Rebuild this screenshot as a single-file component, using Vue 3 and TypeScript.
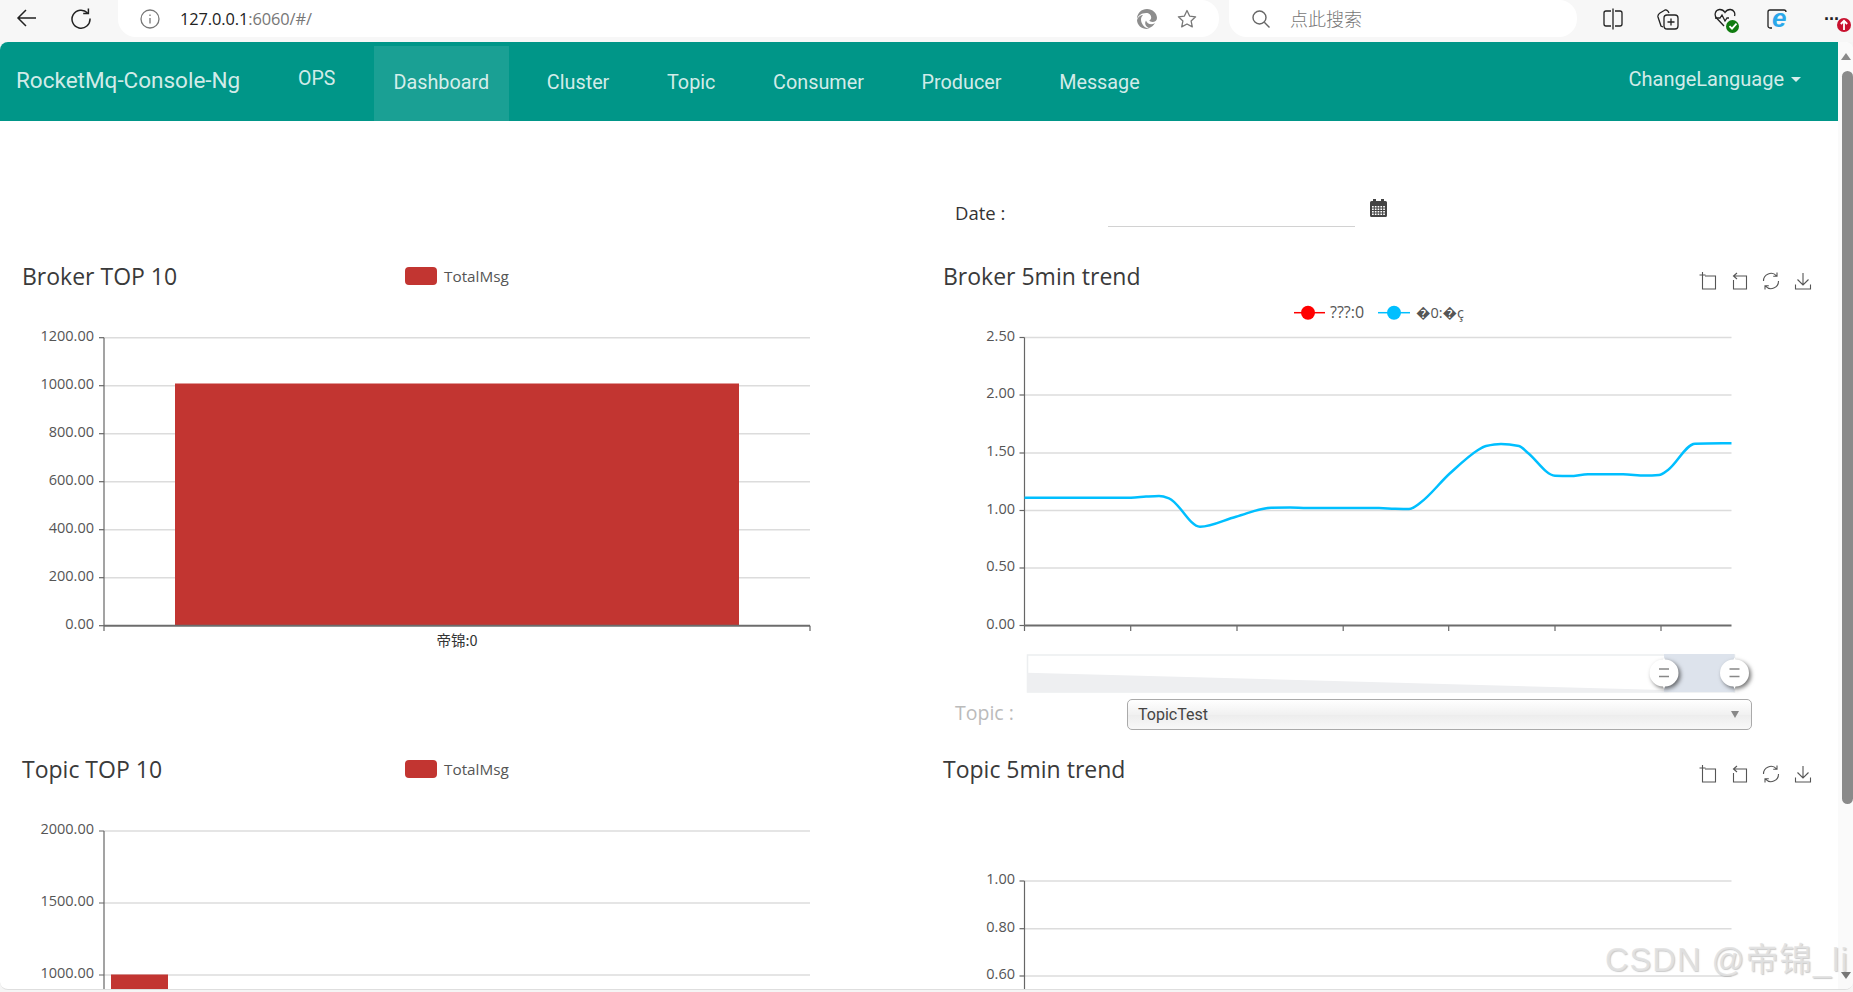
<script setup lang="ts">
type Pt = [number, number]

const navItems = ['Dashboard', 'Cluster', 'Topic', 'Consumer', 'Producer', 'Message']

const brokerTop = [
  { label: '1200.00', y: 337.7 },
  { label: '1000.00', y: 385.7 },
  { label: '800.00', y: 433.7 },
  { label: '600.00', y: 481.7 },
  { label: '400.00', y: 529.7 },
  { label: '200.00', y: 577.7 },
  { label: '0.00', y: 625.7 },
]
const brokerTrend = [
  { label: '2.50', y: 337.5 },
  { label: '2.00', y: 395 },
  { label: '1.50', y: 453 },
  { label: '1.00', y: 510.5 },
  { label: '0.50', y: 568 },
  { label: '0.00', y: 625.5 },
]
const trendTicks = [1024.5, 1130.7, 1237, 1343.2, 1448.7, 1555, 1661]
const topicTop = [
  { label: '2000.00', y: 831 },
  { label: '1500.00', y: 903 },
  { label: '1000.00', y: 975 },
]
const topicTrend = [
  { label: '1.00', y: 881 },
  { label: '0.80', y: 928.7 },
  { label: '0.60', y: 976 },
]

const trendPoints: Pt[] = [
  [1024.5, 497.7], [1131, 497.7], [1146, 496.6], [1159, 495.9], [1169, 498.3], [1200, 526.7], [1236, 516.7],
  [1271, 507.7], [1290, 507.4], [1307, 508], [1379, 508], [1395, 508.8], [1409, 509], [1420, 503], [1450, 473.3], [1478, 450],
  [1486, 446], [1501, 444], [1519, 446], [1528, 453], [1555, 475.7], [1570, 476], [1588, 474.3], [1623, 474.3], [1645, 475.6], [1659, 475],
  [1668, 470], [1695, 443.7], [1731.5, 443.3],
]

function monotone(p: Pt[]): string {
  const n = p.length
  const slopes: number[] = []
  for (let i = 0; i < n - 1; i++) slopes.push((p[i + 1][1] - p[i][1]) / (p[i + 1][0] - p[i][0]))
  const m: number[] = [slopes[0]]
  for (let i = 1; i < n - 1; i++) {
    const a = slopes[i - 1]
    const b = slopes[i]
    m.push(a * b <= 0 ? 0 : (2 * a * b) / (a + b))
  }
  m.push(slopes[n - 2])
  let d = `M${p[0][0]} ${p[0][1]}`
  for (let i = 0; i < n - 1; i++) {
    const dx = (p[i + 1][0] - p[i][0]) / 3
    d += ` C${(p[i][0] + dx).toFixed(1)} ${(p[i][1] + m[i] * dx).toFixed(1)} ${(p[i + 1][0] - dx).toFixed(1)} ${(p[i + 1][1] - m[i + 1] * dx).toFixed(1)} ${p[i + 1][0]} ${p[i + 1][1]}`
  }
  return d
}
const trendPath = monotone(trendPoints)
const handles = [1664, 1734.5]
</script>

<template>
  <div class="window">
    <header class="browser">
      <svg class="b-ico back" width="22" height="22" viewBox="0 0 22 22"><path d="M20 11H2M10 3l-8 8 8 8" /></svg>
      <svg class="b-ico reload" width="22" height="22" viewBox="0 0 22 22"><path d="M17.6 6A9 9 0 1 0 20 11.5" /><path d="M18.4 1.5V6.6H13.2" /></svg>
      <div class="pill url">
        <svg class="info" width="20" height="20" viewBox="0 0 20 20"><circle cx="10" cy="10" r="9" /><path d="M10 9v5.5M10 5.5v1.4" /></svg>
        <span class="addr"><b>127.0.0.1</b>:6060/#/</span>
        <svg class="edge" width="22" height="22" viewBox="0 0 22 22"><path d="M1 11C1 5 5.5 1 11 1c5.5 0 10 4 10 9 0 2.600-2.200 4-4.500 4-1.400 0-2.800-.5-3.300-1.400 1.300-.7 2-1.800 2-3C15.200 7 13 5 10.200 5 5 5 2 8 1 11z" /><path d="M1 12c1-3.500 4-5 6-5-1.500 1.500-2 3-2 4.500C5 16 9 20.500 13.500 20.700 12.700 21 11.800 21 11 21 5.500 21 1 17 1 12z" /><path d="M10 12.500c1 3.500 5.500 5 9 2.500-1.400 2.500-3.600 4.400-6 5-3-1-5-4.500-3-7.500z" /></svg>
        <svg class="star" width="20" height="20" viewBox="0 0 20 20"><path d="M10 1.500l2.600 5.600 6 .7-4.500 4.100 1.200 6L10 15l-5.300 2.900 1.200-6L1.400 7.800l6-.7z" /></svg>
      </div>
      <div class="pill search">
        <svg class="mag" width="20" height="20" viewBox="0 0 20 20"><circle cx="8.500" cy="8.500" r="6.500" /><path d="M13.300 13.300L18.500 18.500" /></svg>
        <span class="placeholder">点此搜索</span>
      </div>
      <div class="tools">
        <svg width="20" height="22" viewBox="0 0 20 22"><path d="M8 3H3a2 2 0 0 0-2 2v11a2 2 0 0 0 2 2h5M12 3h5a2 2 0 0 1 2 2v11a2 2 0 0 1-2 2h-5M10 .5v21" /></svg>
        <svg width="22" height="22" viewBox="0 0 22 22"><path d="M6 19l-2-1-3-9c-.5-2 .5-3 2-4l5-3c2-.5 3 .5 4 3" /><rect x="7" y="7" width="14" height="14" rx="3" /><path d="M14 10.500v7M10.500 14h7" /></svg>
        <span class="health">
          <svg width="22" height="22" viewBox="0 0 22 22"><path d="M10 19L2.500 11C0 8 1 3 5.500 2.500 8 2.300 10 4 11 5.500 12 4 14 2.300 16.500 2.500 20 3 21.500 6 20.500 9" /><path d="M1 11h5l2-3 3 6 2-3h2" /></svg>
          <i class="ok"><svg width="12" height="12" viewBox="0 0 12 12"><path d="M2.500 6.200l2.500 2.500 4.500-5" /></svg></i>
        </span>
        <span class="ie">
          <svg width="22" height="24" viewBox="0 0 22 24"><path d="M5 21H3a2 2 0 0 1-2-2V5a2 2 0 0 1 2-2h14a2 2 0 0 1 2 2" /></svg>
          <i class="ie-e">e</i>
        </span>
        <span class="more">
          <span class="dots">···</span>
          <i class="up"><svg width="12" height="12" viewBox="0 0 12 12"><path d="M6 11V2M2.800 5L6 1.800 9.200 5" /></svg></i>
        </span>
      </div>
    </header>

    <div class="page">
      <div class="main">
        <nav class="navbar">
          <span class="brand">RocketMq-Console-Ng</span>
          <a class="ops">OPS</a>
          <ul class="nav-list">
            <li v-for="(n, i) in navItems" :key="n" :class="{ active: i === 0 }">{{ n }}</li>
          </ul>
          <a class="lang">ChangeLanguage<i class="caret"></i></a>
        </nav>

        <section class="content">
          <div class="date-row">
            <label class="date-label">Date :</label>
            <div class="date-input"></div>
            <svg class="cal" width="17" height="18" viewBox="0 0 17 18">
              <path d="M0 3.500A1.500 1.500 0 0 1 1.500 2H3V0h3v2h5V0h3v2h1.500A1.500 1.500 0 0 1 17 3.500V16.500A1.500 1.500 0 0 1 15.500 18h-14A1.500 1.500 0 0 1 0 16.500z" fill="#444" />
              <g fill="#fff"><rect v-for="c in 20" :key="c" :x="2 + ((c - 1) % 5) * 2.800" :y="7 + Math.floor((c - 1) / 5) * 2.500" width="1.700" height="1.500" /></g>
            </svg>
          </div>

          <div class="charts">
            <article class="panel">
              <div class="panel-head">
                <h3 class="title">Broker TOP 10</h3>
                <span class="legend"><i class="swatch"></i>TotalMsg</span>
              </div>
              <svg class="chart" width="921" height="360" viewBox="0 301 921 360">
                <g v-for="t in brokerTop" :key="t.label">
                  <line v-if="t.y < 625" class="grid" x1="104" x2="810" :y1="t.y" :y2="t.y" />
                  <line class="axis" x1="99" x2="104" :y1="t.y" :y2="t.y" />
                  <text class="tick" x="94" :y="t.y + 3" text-anchor="end">{{ t.label }}</text>
                </g>
                <rect x="175" y="383.500" width="564" height="242" fill="#c23531" />
                <line class="axis" x1="104" x2="104" y1="337.700" y2="631" />
                <line class="axis thick" x1="104" x2="810" y1="625.700" y2="625.700" />
                <line class="axis" x1="810" x2="810" y1="625.700" y2="631" />
                <text class="tick cjk" x="457" y="645.500" text-anchor="middle">帝锦:0</text>
              </svg>
            </article>

            <article class="panel">
              <div class="panel-head">
                <h3 class="title">Broker 5min trend</h3>
                <div class="toolbox">
                  <svg width="18" height="18" viewBox="0 0 18 18"><path d="M1 3v6M-2 6h6" transform="translate(2.500 -3)" /><path d="M3.500 6v11h13V4H6" /></svg>
                  <svg width="18" height="18" viewBox="0 0 18 18"><path d="M3.500 8v9h13V4H4M7 1L3.500 4 7 7" /></svg>
                  <svg width="20" height="18" viewBox="0 0 20 18"><path d="M2.500 9a7.500 7.500 0 0 1 13-5.200M17.500 9a7.500 7.500 0 0 1-13 5.200M16 .5v3.800h-3.800M4 17.500v-3.800h3.800" /></svg>
                  <svg width="18" height="18" viewBox="0 0 18 18"><path d="M9 1v11.500M3.500 7.500L9 13l5.500-5.500M1.500 12.500v4.500h15v-4.500" /></svg>
                </div>
              </div>
              <svg class="chart" width="917" height="394" viewBox="921 301 917 394">
                <g class="lg">
                  <line x1="1294" x2="1325" y1="312.700" y2="312.700" stroke="#f00" stroke-width="1.500" />
                  <circle cx="1308" cy="312.700" r="7" fill="#f00" />
                  <text class="tick lgt" x="1330" y="317.500">???:0</text>
                  <line x1="1378" x2="1410" y1="312.700" y2="312.700" stroke="#00bfff" stroke-width="1.500" />
                  <circle cx="1394" cy="312.700" r="7" fill="#00bfff" />
                  <text class="tick" x="1416" y="317.500">�0:�ç</text>
                </g>
                <g v-for="t in brokerTrend" :key="t.label">
                  <line v-if="t.y < 625" class="grid" x1="1024.500" x2="1731.500" :y1="t.y" :y2="t.y" />
                  <line class="axis" x1="1019.500" x2="1024.500" :y1="t.y" :y2="t.y" />
                  <text class="tick" x="1015" :y="t.y + 3" text-anchor="end">{{ t.label }}</text>
                </g>
                <line v-for="x in trendTicks" :key="x" class="axis" :x1="x" :x2="x" y1="625.500" y2="631" />
                <line class="axis" x1="1024.500" x2="1024.500" y1="337.500" y2="625.500" />
                <line class="axis thick" x1="1024.500" x2="1731.500" y1="625.500" y2="625.500" />
                <path :d="trendPath" fill="none" stroke="#00bfff" stroke-width="2.500" />

                <rect x="1027.500" y="655" width="707" height="37" fill="#fff" stroke="#eceef0" stroke-width="1.500" />
                <path d="M1027 672.700L1664 690V692H1027z" fill="#eeeff1" />
                <rect x="1664" y="654" width="70.500" height="38" fill="#dde3ec" />
                <g v-for="h in handles" :key="h" class="handle">
                  <path :d="`M${h} 657.500 l1 2 a13.500 13.500 0 0 1 0 27 l-1 2.500 l-1 -2.500 a13.500 13.500 0 0 1 0 -27 z`" fill="#fff" />
                  <path :d="`M${h - 5} 669h10M${h - 5} 676.500h10`" stroke="#888" stroke-width="1.500" fill="none" />
                </g>
              </svg>
              <div class="topic-row">
                <label class="topic-label">Topic :</label>
                <div class="select">TopicTest<i class="sel-arrow"></i></div>
              </div>
            </article>

            <article class="panel">
              <div class="panel-head">
                <h3 class="title">Topic TOP 10</h3>
                <span class="legend"><i class="swatch"></i>TotalMsg</span>
              </div>
              <svg class="chart" width="921" height="195" viewBox="0 794 921 195">
                <g v-for="t in topicTop" :key="t.label">
                  <line class="grid" x1="104" x2="810" :y1="t.y" :y2="t.y" />
                  <line class="axis" x1="99" x2="104" :y1="t.y" :y2="t.y" />
                  <text class="tick" x="94" :y="t.y + 3" text-anchor="end">{{ t.label }}</text>
                </g>
                <rect x="111" y="974.500" width="57" height="20" fill="#c23531" />
                <line class="axis" x1="104" x2="104" y1="831" y2="995" />
              </svg>
            </article>

            <article class="panel">
              <div class="panel-head">
                <h3 class="title">Topic 5min trend</h3>
                <div class="toolbox">
                  <svg width="18" height="18" viewBox="0 0 18 18"><path d="M1 3v6M-2 6h6" transform="translate(2.500 -3)" /><path d="M3.500 6v11h13V4H6" /></svg>
                  <svg width="18" height="18" viewBox="0 0 18 18"><path d="M3.500 8v9h13V4H4M7 1L3.500 4 7 7" /></svg>
                  <svg width="20" height="18" viewBox="0 0 20 18"><path d="M2.500 9a7.500 7.500 0 0 1 13-5.200M17.500 9a7.500 7.500 0 0 1-13 5.200M16 .5v3.800h-3.800M4 17.500v-3.800h3.800" /></svg>
                  <svg width="18" height="18" viewBox="0 0 18 18"><path d="M9 1v11.500M3.500 7.500L9 13l5.500-5.500M1.500 12.500v4.500h15v-4.500" /></svg>
                </div>
              </div>
              <svg class="chart" width="917" height="195" viewBox="921 794 917 195">
                <g v-for="t in topicTrend" :key="t.label">
                  <line class="grid" x1="1024.500" x2="1731.500" :y1="t.y" :y2="t.y" />
                  <line class="axis" x1="1019.500" x2="1024.500" :y1="t.y" :y2="t.y" />
                  <text class="tick" x="1015" :y="t.y + 3" text-anchor="end">{{ t.label }}</text>
                </g>
                <line class="axis" x1="1024.500" x2="1024.500" y1="881" y2="995" />
              </svg>
            </article>
          </div>
        </section>
      </div>

      <aside class="scrollbar">
        <i class="sb-up"></i>
        <i class="sb-thumb"></i>
        <i class="sb-down"></i>
      </aside>
    </div>

    <div class="watermark">CSDN @帝锦_li</div>
  </div>
</template>

<style>
html, body { margin: 0; padding: 0; background: #f7f7f7; overflow: hidden; }
</style>

<style scoped>
.window { position: relative; width: 1853px; height: 992px; display: flex; flex-direction: column; overflow: hidden; background: #f5f5f5; font-family: Roboto, "Noto Sans CJK SC", sans-serif; }

.browser { height: 42px; flex: none; display: flex; align-items: flex-start; background: #f7f7f7; position: relative; }
.b-ico { fill: none; stroke: #222; stroke-width: 1.500; flex: none; }
.back { margin: 7px 0 0 16px; }
.reload { margin: 7px 0 0 32px; }
.pill { height: 37px; background: #fff; display: flex; align-items: center; flex: none; box-sizing: border-box; }
.url { width: 1101px; margin-left: 26px; border-radius: 0 18px 18px 18px; padding-left: 22px; }
.info { fill: none; stroke: #777; stroke-width: 1.300; flex: none; }
.addr { margin-left: 20px; font-size: 16.400px; color: #777; letter-spacing: -.1px; font-family: "Open Sans", sans-serif; }
.addr b { font-weight: 400; color: #222; }
.edge { margin-left: auto; fill: #8d8d8d; }
.star { margin: 0 22px 0 19px; fill: none; stroke: #777; stroke-width: 1.300; stroke-linejoin: round; }
.search { width: 348px; margin-left: 10px; border-radius: 0 18px 18px 18px; padding-left: 22px; }
.mag { fill: none; stroke: #666; stroke-width: 1.400; }
.placeholder { margin: -2px 0 0 19px; font: 300 18px "Noto Sans CJK SC", sans-serif; color: #777; }
.tools { display: flex; align-items: center; height: 37px; margin-left: 26px; gap: 34px; }
.tools svg { fill: none; stroke: #222; stroke-width: 1.300; flex: none; }
.health, .ie, .more { position: relative; display: block; width: 22px; height: 24px; }
.health { margin-left: 1px; }
.ok { position: absolute; right: -3px; bottom: -2px; width: 13px; height: 13px; border-radius: 50%; background: #107c10; }
.ok svg { display: block; stroke: #fff; stroke-width: 1.800; margin: .5px; }
.ie { margin-left: -3px; }
.ie-e { position: absolute; left: 5px; top: -2px; font: italic 700 26px/26px "Liberation Sans", sans-serif; color: #2aa7ea; }
.dots { position: absolute; left: 1px; top: 0; font: 700 18px/24px "Liberation Sans", sans-serif; color: #222; letter-spacing: -1px; }
.up { position: absolute; left: 14px; top: 11px; width: 14px; height: 14px; border-radius: 50%; background: #c8102e; }
.up svg { display: block; stroke: #fff; stroke-width: 1.800; margin: 1px; }

.page { flex: none; height: 947px; display: flex; background: #fff; border-radius: 8px; overflow: hidden; border-bottom: 1px solid #dedede; }
.main { flex: none; width: 1838px; overflow: hidden; }
.navbar { height: 79px; background: #009688; color: rgba(255, 255, 255, .84); display: flex; align-items: flex-start; font-size: 20px; }
.brand { margin: 24px 0 0 16px; font-size: 22.500px; line-height: 28px; width: 282px; flex: none; }
.ops { margin-top: 24px; line-height: 26px; width: 38px; flex: none; font-size: 19.500px; }
.nav-list { list-style: none; margin: 4px 0 0 38px; padding: 0; display: flex; gap: 18.700px; }
.nav-list li { height: 75px; padding: 0 19.500px; line-height: 74px; font-size: 19.800px; box-sizing: border-box; }
.nav-list li.active { background: rgba(255, 255, 255, .1); }
.lang { margin: 24px 0 0 auto; padding-right: 37px; line-height: 26px; font-size: 20px; display: flex; align-items: center; }
.caret { width: 0; height: 0; border-left: 5px solid transparent; border-right: 5px solid transparent; border-top: 5px solid currentColor; margin-left: 7px; }

.date-row { height: 129px; box-sizing: border-box; padding: 78px 0 0 955px; display: flex; align-items: flex-start; }
.date-label { width: 153px; font: 400 18.500px/28px "Open Sans", sans-serif; color: #333; flex: none; }
.date-input { width: 247px; height: 27px; border-bottom: 1px solid #d2d2d2; flex: none; }
.cal { margin: 0 0 0 15px; flex: none; }

.charts { display: grid; grid-template-columns: 921px 917px; grid-template-rows: 493px 250px; }
.panel { min-width: 0; overflow: hidden; }
.panel-head { height: 51px; display: flex; align-items: center; padding: 0 26px 0 22px; }
.title { margin: 0; font: 400 23px/32px "Open Sans", sans-serif; color: #3a3a3a; width: 383px; flex: none; white-space: nowrap; }
.legend { display: flex; align-items: center; font: 400 15.300px/18px "Open Sans", sans-serif; color: #555; }
.swatch { width: 32px; height: 18px; border-radius: 4px; background: #c23531; margin-right: 7px; }
.toolbox { margin: 11px 0 0 auto; display: flex; align-items: center; gap: 13px; }
.toolbox svg { fill: none; stroke: #555; stroke-width: 1.100; flex: none; overflow: visible; }
.chart { display: block; }
.grid { stroke: #dcdcdc; stroke-width: 1.500; }
.axis { stroke: #666; stroke-width: 1.200; }
.thick { stroke-width: 2; stroke: #6c6c6c; }
.tick { font: 400 14.500px "Open Sans", sans-serif; fill: #555; }
.lgt { font-size: 16px; }
.cjk { font-family: "Noto Sans CJK SC", sans-serif; fill: #333; }
.handle { filter: drop-shadow(2px 2px 2px rgba(0, 0, 0, .55)); }

.topic-row { display: flex; align-items: center; margin-top: 4px; padding-left: 34px; }
.topic-label { width: 172px; font: 400 19.500px/26px "Open Sans", sans-serif; color: #bbb; flex: none; margin-top: -4px; }
.select { position: relative; width: 625px; height: 31px; box-sizing: border-box; border: 1px solid #aaa; border-radius: 5px; padding-left: 10px; font: 400 16px/29px Roboto, sans-serif; color: #444; background: linear-gradient(#fff 0%, #f1f1f1 50%, #ededed 52%, #f8f8f8 100%); }
.sel-arrow { position: absolute; right: 12px; top: 11px; width: 0; height: 0; border-left: 4.500px solid transparent; border-right: 4.500px solid transparent; border-top: 7px solid #888; }

.scrollbar { position: relative; flex: 1; background: #fafafa; }
.sb-up { position: absolute; left: 3px; top: 11px; width: 0; height: 0; border-left: 5px solid transparent; border-right: 5px solid transparent; border-bottom: 7px solid #8a8a8a; }
.sb-thumb { position: absolute; left: 4px; right: 0; top: 29px; height: 733px; background: #8a8a8a; border-radius: 6px; }
.sb-down { position: absolute; left: 3px; top: 930px; width: 0; height: 0; border-left: 5px solid transparent; border-right: 5px solid transparent; border-top: 7px solid #777; }

.watermark { position: absolute; left: 1605px; top: 937px; font: 400 32.500px/46px "Liberation Sans", "Noto Sans CJK SC", sans-serif; letter-spacing: 1.100px; color: rgba(226, 226, 226, .9); text-shadow: 1px 1px 1px rgba(140, 140, 140, .45); white-space: nowrap; }
</style>
